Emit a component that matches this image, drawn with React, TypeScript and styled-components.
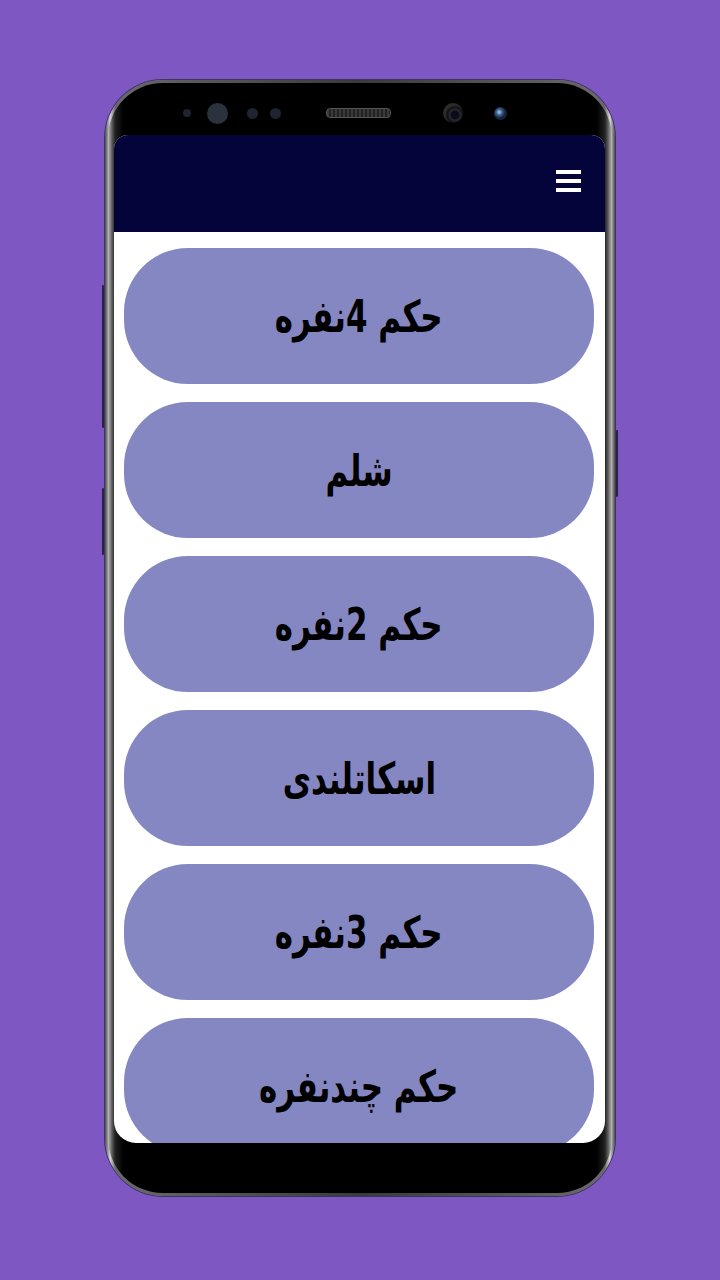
import React from "react";
import styled, { createGlobalStyle } from "styled-components";

const Global = createGlobalStyle`
  html, body { margin: 0; padding: 0; background: #7e57c2; }
  body { font-family: "DejaVu Sans", "Noto Sans", sans-serif; }
`;

const Page = styled.div`
  width: 720px;
  height: 1280px;
  background: #7e57c2;
  display: flex;
  justify-content: center;
  padding-top: 80px;
  box-sizing: border-box;
`;

const Phone = styled.div`
  position: relative;
  width: 510px;
  height: 1116px;
  box-sizing: border-box;
  border-radius: 58px;
  padding: 3px;
  background: linear-gradient(90deg, #4a4a4a 0%, #d8d8d8 1%, #6a6a6a 2%, #3a3a3a 50%, #6a6a6a 98%, #d8d8d8 99%, #4a4a4a 100%);
  box-shadow: 0 0 0 1px #3b3560;
`;

const Body = styled.div`
  height: 100%;
  border-radius: 55px;
  background:
    linear-gradient(90deg, #bdbdbd 0%, #5a5a5a 0.8%, #222 1.4%, #000 3%, #000 97%, #222 98.6%, #5a5a5a 99.2%, #bdbdbd 100%);
  display: flex;
  flex-direction: column;
  align-items: center;
  overflow: hidden;
`;

const TopBezel = styled.div`
  height: 52px;
  width: 100%;
  display: flex;
  align-items: center;
  box-sizing: border-box;
  padding: 8px 0 0 75px;
`;

const Dot = styled.div<{ size: number; color: string; ml: number }>`
  width: ${(p) => p.size}px;
  height: ${(p) => p.size}px;
  border-radius: 50%;
  background: ${(p) => p.color};
  margin-left: ${(p) => p.ml}px;
  flex-shrink: 0;
`;

const Speaker = styled.div`
  width: 63px;
  height: 8px;
  border-radius: 4px;
  background: repeating-linear-gradient(90deg, #3a3a3a 0 2px, #222 2px 4px);
  border: 1px solid #555;
  margin-left: 45px;
  flex-shrink: 0;
`;

const Lens = styled.div<{ ml: number }>`
  width: 20px;
  height: 20px;
  border-radius: 50%;
  background: radial-gradient(circle at 60% 60%, #0b0b1a 0 4px, #2a2a33 5px, #111 8px, #2c2c2c 10px);
  margin-left: ${(p) => p.ml}px;
  flex-shrink: 0;
`;

const Sensor = styled.div`
  width: 13px;
  height: 13px;
  border-radius: 50%;
  background: radial-gradient(circle at 40% 40%, #8fb0d8 0 1px, #3a5d8a 3px, #17233a 6px);
  margin-left: 31px;
  flex-shrink: 0;
`;

const Screen = styled.div`
  width: 491px;
  height: 1008px;
  background: #ffffff;
  border-radius: 14px 14px 22px 22px;
  overflow: hidden;
  display: flex;
  flex-direction: column;
  margin-left: -1px;
`;

const Header = styled.div`
  height: 97px;
  flex-shrink: 0;
  background: #04043a;
  display: flex;
  align-items: center;
  justify-content: flex-end;
  padding-right: 24px;
  box-sizing: border-box;
`;

const MenuButton = styled.div`
  width: 25px;
  display: flex;
  flex-direction: column;
  gap: 5px;
  margin-top: -5px;
`;

const Bar = styled.span`
  display: block;
  height: 4px;
  background: #ffffff;
`;

const List = styled.div`
  display: flex;
  flex-direction: column;
  gap: 18px;
  padding: 16px 11px 0 10px;
`;

const Item = styled.div`
  height: 136px;
  flex-shrink: 0;
  border-radius: 64px;
  background: #8587c2;
  display: flex;
  align-items: center;
  justify-content: center;
  box-sizing: border-box;
`;

const Label = styled.span`
  display: inline-block;
  direction: rtl;
  font-family: "DejaVu Sans Condensed", "DejaVu Sans", "Noto Sans", sans-serif;
  font-stretch: condensed;
  font-weight: bold;
  font-size: 44px;
  line-height: 1;
  color: #000;
  transform: scaleX(0.78);
  margin-top: 2px;
`;

const SideKey = styled.div<{ side: "left" | "right"; top: number; h: number }>`
  position: absolute;
  ${(p) => (p.side === "left" ? "left: -3px;" : "right: -3px;")}
  top: ${(p) => p.top}px;
  width: 2px;
  height: ${(p) => p.h}px;
  background: #2a2340;
  border-radius: 1px;
`;

const items = ["حکم 4نفره", "شلم", "حکم 2نفره", "اسکاتلندی", "حکم 3نفره", "حکم چندنفره"];

export default function App() {
  return (
    <>
      <Global />
      <Page>
        <Phone>
          <SideKey side="left" top={205} h={143} />
          <SideKey side="left" top={408} h={67} />
          <SideKey side="right" top={350} h={67} />
          <Body>
            <TopBezel>
              <Dot size={8} color="#1e2430" ml={0} />
              <Dot size={21} color="#2a323e" ml={16} />
              <Dot size={11} color="#1e2530" ml={19} />
              <Dot size={11} color="#1e2530" ml={12} />
              <Speaker />
              <Lens ml={52} />
              <Sensor />
            </TopBezel>
            <Screen>
              <Header>
                <MenuButton>
                  <Bar />
                  <Bar />
                  <Bar />
                </MenuButton>
              </Header>
              <List>
                {items.map((t) => (
                  <Item key={t}>
                    <Label>{t}</Label>
                  </Item>
                ))}
              </List>
            </Screen>
          </Body>
        </Phone>
      </Page>
    </>
  );
}
